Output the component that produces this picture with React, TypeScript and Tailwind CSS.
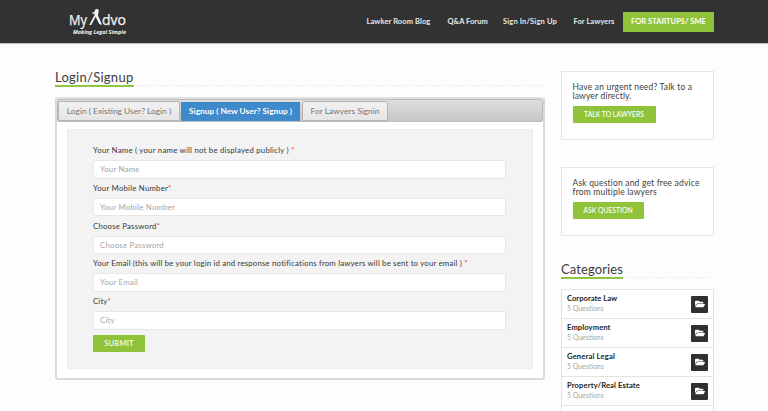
import type { ReactNode } from "react";
import { FaFolderOpen } from "react-icons/fa";

const navLinks = [
  { label: "Lawker Room Blog", cls: "mr-4 w-[65px] tracking-[0.1px]" },
  { label: "Q&A Forum", cls: "mr-4 w-[39.5px] tracking-[0.02px]" },
  { label: "Sign In/Sign Up", cls: "mr-4 w-[54.5px] tracking-[0.15px]" },
  { label: "For Lawyers", cls: "mr-2 w-[41.5px] tracking-[0.05px]" },
];

const fields = [
  {
    label: "Your Name ( your name will not be displayed publicly ) ",
    hint: "Your Name",
    cls: "tracking-[0.23px]",
  },
  { label: "Your Mobile Number", hint: "Your Mobile Number", cls: "tracking-[0.22px]" },
  { label: "Choose Password", hint: "Choose Password", cls: "tracking-[0.2px]" },
  {
    label:
      "Your Email (this will be your login id and response notifications from lawyers will be sent to your email ) ",
    hint: "Your Email",
    cls: "tracking-[0.185px]",
  },
  { label: "City", hint: "City", cls: "tracking-[0.15px]" },
];

const categories = [
  { name: "Corporate Law", cls: "tracking-[0.02px]" },
  { name: "Employment", cls: "tracking-[0.1px]" },
  { name: "General Legal", cls: "tracking-[0.17px]" },
  { name: "Property/Real Estate", cls: "tracking-[0.13px]" },
];

function Logo() {
  return (
    <svg className="ml-[68px] mt-[7px] h-[30px] w-[60px] shrink-0" viewBox="0 0 60 30">
      <g fill="#f4f4f4">
        <text x="1" y="18" fontFamily="'Open Sans', sans-serif" fontSize="15.2" stroke="#f4f4f4" strokeWidth="0.25" textLength="18" lengthAdjust="spacingAndGlyphs">
          My
        </text>
        <text x="34" y="18" fontFamily="'Open Sans', sans-serif" fontSize="15.2" stroke="#f4f4f4" strokeWidth="0.25" textLength="24" lengthAdjust="spacingAndGlyphs">
          dvo
        </text>
        <text x="5" y="26.8" fontFamily="'Open Sans', sans-serif" fontSize="5.5" fontWeight="700" fontStyle="italic" textLength="53" lengthAdjust="spacingAndGlyphs">
          Making Legal Simple
        </text>
        <ellipse cx="28.8" cy="3.6" rx="2" ry="1.6" />
        <path d="M24.2 5.8 27.4 4.2 30.6 4.6 30 8.4 34 17.8 31.4 17.3 27.6 9.8 23.2 18 21.2 18 26.3 8.4 26.4 6.2 24.4 7Z" />
      </g>
    </svg>
  );
}

function Heading({ children, cls }: { children: ReactNode; cls: string }) {
  return (
    <div className="flex h-[18px] border-b border-dashed border-[#ececec]">
      <h2 className={`h-[19px] border-b-2 border-[#8dc63f] whitespace-nowrap text-[13px] leading-[19px] text-[#3c3c3c] ${cls}`}>
        {children}
      </h2>
    </div>
  );
}

function Promo({ lines, button, cls }: { lines: string[]; button: string; cls: string }) {
  return (
    <section className="h-[69px] border border-[#e6e6e6] bg-white pl-[10.5px] pt-[11px]">
      {lines.map((line) => (
        <p key={line} className="whitespace-nowrap text-[8.5px] leading-[9px] tracking-[0.18px] text-[#404040]">
          {line}
        </p>
      ))}
      <button className={`mt-[5px] block h-[17px] rounded-[1px] bg-[#8fc33a] text-[6.8px] leading-[17px] font-medium whitespace-nowrap text-white ${cls}`}>
        {button}
      </button>
    </section>
  );
}

export default function App() {
  return (
    <div className="h-[411px] w-[768px] overflow-hidden bg-[#fdfdfd] font-[Lato,sans-serif]">
      <header className="flex h-11 border-b border-[#bdbdbd] bg-[#323232]">
        <Logo />
        <nav className="ml-auto mr-[54px] flex h-[43px] items-center pt-px text-[7.5px] font-bold text-[#e8e8e8]">
          {navLinks.map((link) => (
            <a key={link.label} className={`whitespace-nowrap ${link.cls}`}>
              {link.label}
            </a>
          ))}
          <button className="h-5 w-[91px] rounded-[1px] bg-[#8fc33a] tracking-[0.02px] whitespace-nowrap text-white">
            FOR STARTUPS/ SME
          </button>
        </nav>
      </header>

      <div className="flex gap-4 pl-[55px]">
        <main className="w-[490px] pt-[24px]">
          <Heading cls="w-[78.5px] tracking-[0.27px]">Login/Signup</Heading>
          <div className="mt-[11px] h-[283px] rounded-[3px] border-2 border-[#d9d9d9] border-t-[#e0e0e0] bg-white">
            <div className="flex h-[23px] items-end rounded-[2px] border border-[#bcbcbc] bg-linear-to-b from-[#dedede] to-[#c6c6c6] text-[8.4px] text-[#757575]">
              <div className="h-[20px] w-[122px] rounded-t-[2px] border border-[#b5b5b5] bg-linear-to-b from-[#f1f1f1] to-[#e6e6e6] text-center leading-[19px] whitespace-nowrap">
                Login ( Existing User? Login )
              </div>
              <div className="ml-px h-[19px] w-[119px] bg-[#3e8acb] text-center text-[8.3px] leading-[19px] font-bold whitespace-nowrap text-white">
                Signup ( New User? Signup )
              </div>
              <div className="ml-[2px] h-[20px] w-[86px] rounded-t-[2px] border border-[#b5b5b5] bg-linear-to-b from-[#f1f1f1] to-[#e6e6e6] text-center leading-[19px] whitespace-nowrap">
                For Lawyers Signin
              </div>
            </div>
            <form className="mx-[10px] mt-[7px] h-[240px] border border-[#eeeeee] bg-[#f3f3f3] px-[25px] pt-[14px]">
              {fields.map((field) => (
                <div key={field.hint} className="h-[37.8px]">
                  <label className={`block h-[16px] text-[7.8px] leading-[12px] whitespace-nowrap text-[#383838] ${field.cls}`}>
                    {field.label}
                    <span className="text-[#f44]">*</span>
                  </label>
                  <div className="h-[18.5px] w-[413px] rounded-[2px] border border-[#e7e7e7] bg-white pl-[6px] text-[7.8px] leading-[17px] tracking-[0.22px] whitespace-nowrap text-[#a5a5a5]">
                    {field.hint}
                  </div>
                </div>
              ))}
              <button type="button" className="mt-[2px] block h-[17px] w-[52px] rounded-[1px] bg-[#8fc33a] text-[7.7px] font-medium tracking-[0.1px] text-white">
                SUBMIT
              </button>
            </form>
          </div>
        </main>

        <aside className="w-[153px] pt-[27px]">
          <Promo
            lines={["Have an urgent need? Talk to a", "lawyer directly."]}
            button="TALK TO LAWYERS"
            cls="w-[83px]"
          />
          <div className="h-[27px]" />
          <Promo
            lines={["Ask question and get free advice", "from multiple lawyers"]}
            button="ASK QUESTION"
            cls="w-[71px]"
          />
          <div className="h-[24px]" />
          <Heading cls="w-[61.5px] tracking-[0.1px]">Categories</Heading>
          <ul className="mt-[11px] border border-[#e3e3e3] bg-white">
            {categories.map((category) => (
              <li key={category.name} className="flex h-[29px] items-center justify-between border-b border-[#e3e3e3] pr-[5px] pl-[5px]">
                <div className="pb-px">
                  <p className={`text-[7.6px] leading-[10px] font-bold whitespace-nowrap text-[#222] ${category.cls}`}>
                    {category.name}
                  </p>
                  <p className="text-[6.9px] leading-[11px] whitespace-nowrap text-[#a6a6a6]">5 Questions</p>
                </div>
                <span className="flex h-[17px] w-[17px] items-center justify-center rounded-[1px] bg-[#303030] text-white">
                  <FaFolderOpen size={10} />
                </span>
              </li>
            ))}
            <li className="h-[29px]" />
          </ul>
        </aside>
      </div>
    </div>
  );
}
